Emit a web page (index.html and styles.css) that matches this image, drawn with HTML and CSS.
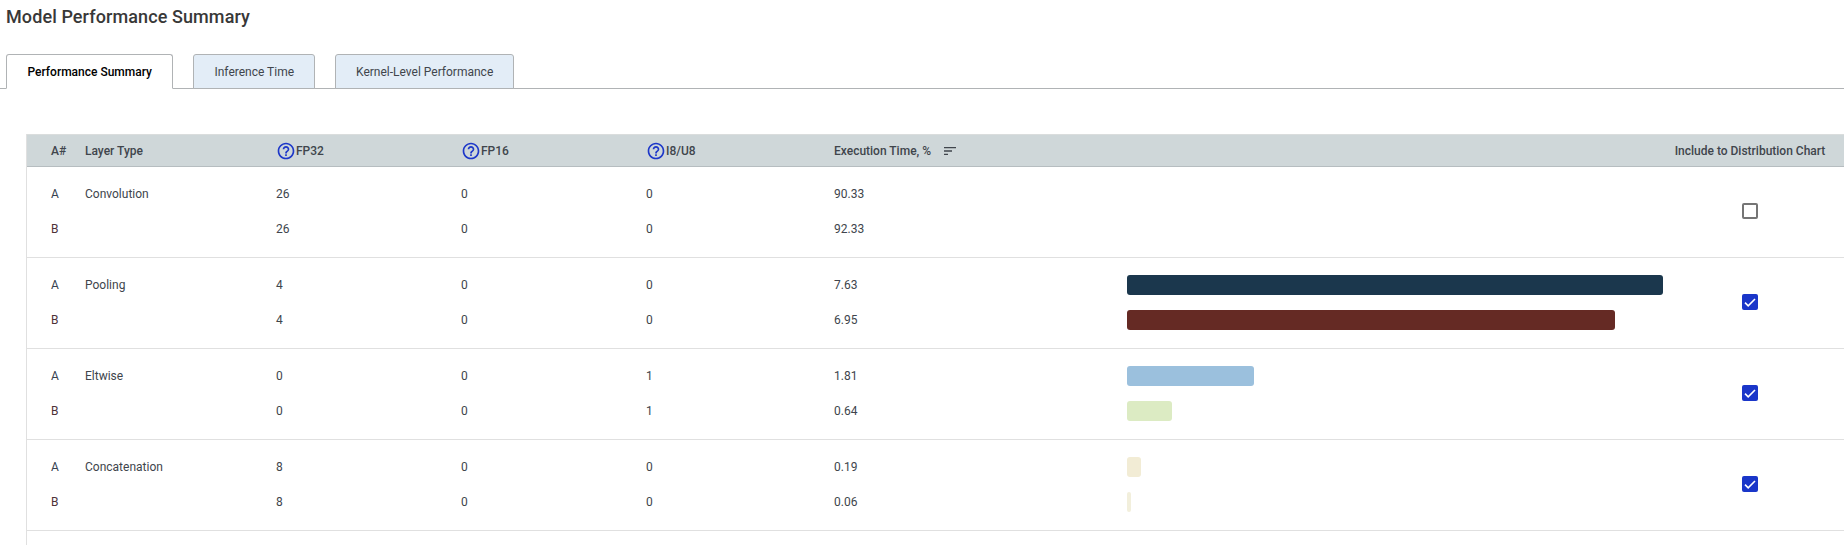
FILE: index.html
```html
<!DOCTYPE html>
<html lang="en">
<head>
    <meta charset="UTF-8">
    <meta name="viewport" content="width=device-width, initial-scale=1.0">
    <title>Model Performance Summary</title>
    <link rel="stylesheet" href="styles.css">
</head>
<body>
    <h1 class="page-title">Model Performance Summary</h1>

    <nav class="tabs">
        <a class="tab tab-active">Performance Summary</a>
        <a class="tab">Inference Time</a>
        <a class="tab">Kernel-Level Performance</a>
    </nav>

    <main class="summary">
        <!-- Table header -->
        <div class="grid-row table-head">
            <div>A#</div>
            <div>Layer Type</div>
            <div class="head-help">
                <svg class="help-icon" viewBox="0 0 24 24"><path d="M11 18h2v-2h-2v2zm1-16C6.48 2 2 6.48 2 12s4.48 10 10 10 10-4.48 10-10S17.52 2 12 2zm0 18c-4.41 0-8-3.59-8-8s3.59-8 8-8 8 3.59 8 8-3.59 8-8 8zm0-14c-2.21 0-4 1.79-4 4h2c0-1.1.9-2 2-2s2 .9 2 2c0 2-3 1.75-3 5h2c0-2.25 3-2.5 3-5 0-2.21-1.79-4-4-4z"/></svg>FP32
            </div>
            <div class="head-help">
                <svg class="help-icon" viewBox="0 0 24 24"><path d="M11 18h2v-2h-2v2zm1-16C6.48 2 2 6.48 2 12s4.48 10 10 10 10-4.48 10-10S17.52 2 12 2zm0 18c-4.41 0-8-3.59-8-8s3.59-8 8-8 8 3.59 8 8-3.59 8-8 8zm0-14c-2.21 0-4 1.79-4 4h2c0-1.1.9-2 2-2s2 .9 2 2c0 2-3 1.75-3 5h2c0-2.25 3-2.5 3-5 0-2.21-1.79-4-4-4z"/></svg>FP16
            </div>
            <div class="head-help">
                <svg class="help-icon" viewBox="0 0 24 24"><path d="M11 18h2v-2h-2v2zm1-16C6.48 2 2 6.48 2 12s4.48 10 10 10 10-4.48 10-10S17.52 2 12 2zm0 18c-4.41 0-8-3.59-8-8s3.59-8 8-8 8 3.59 8 8-3.59 8-8 8zm0-14c-2.21 0-4 1.79-4 4h2c0-1.1.9-2 2-2s2 .9 2 2c0 2-3 1.75-3 5h2c0-2.25 3-2.5 3-5 0-2.21-1.79-4-4-4z"/></svg>I8/U8
            </div>
            <div class="head-sort">
                Execution Time, %
                <svg class="sort-icon" viewBox="0 0 24 24"><path d="M3 18h6v-2H3v2zM3 6v2h18V6H3zm0 7h12v-2H3v2z"/></svg>
            </div>
            <div></div>
            <div class="head-include">Include to Distribution Chart</div>
        </div>

        <!-- Convolution -->
        <div class="grid-row layer">
            <div class="model-a">A</div>
            <div>Convolution</div>
            <div>26</div>
            <div>0</div>
            <div>0</div>
            <div>90.33</div>
            <div></div>
            <div class="include-cell"><span class="check"></span></div>

            <div class="model-b">B</div>
            <div></div>
            <div>26</div>
            <div>0</div>
            <div>0</div>
            <div>92.33</div>
            <div></div>
        </div>

        <!-- Pooling -->
        <div class="grid-row layer">
            <div class="model-a">A</div>
            <div>Pooling</div>
            <div>4</div>
            <div>0</div>
            <div>0</div>
            <div>7.63</div>
            <div><div class="bar bar-navy" style="width: 536px"></div></div>
            <div class="include-cell">
                <span class="check check-on"><svg viewBox="0 0 16 16"><path d="M3 8.6l3.2 3.2L13 5"/></svg></span>
            </div>

            <div class="model-b">B</div>
            <div></div>
            <div>4</div>
            <div>0</div>
            <div>0</div>
            <div>6.95</div>
            <div><div class="bar bar-maroon" style="width: 488px"></div></div>
        </div>

        <!-- Eltwise -->
        <div class="grid-row layer">
            <div class="model-a">A</div>
            <div>Eltwise</div>
            <div>0</div>
            <div>0</div>
            <div>1</div>
            <div>1.81</div>
            <div><div class="bar bar-blue" style="width: 127px"></div></div>
            <div class="include-cell">
                <span class="check check-on"><svg viewBox="0 0 16 16"><path d="M3 8.6l3.2 3.2L13 5"/></svg></span>
            </div>

            <div class="model-b">B</div>
            <div></div>
            <div>0</div>
            <div>0</div>
            <div>1</div>
            <div>0.64</div>
            <div><div class="bar bar-green" style="width: 45px"></div></div>
        </div>

        <!-- Concatenation -->
        <div class="grid-row layer">
            <div class="model-a">A</div>
            <div>Concatenation</div>
            <div>8</div>
            <div>0</div>
            <div>0</div>
            <div>0.19</div>
            <div><div class="bar bar-sand" style="width: 14px"></div></div>
            <div class="include-cell">
                <span class="check check-on"><svg viewBox="0 0 16 16"><path d="M3 8.6l3.2 3.2L13 5"/></svg></span>
            </div>

            <div class="model-b">B</div>
            <div></div>
            <div>8</div>
            <div>0</div>
            <div>0</div>
            <div>0.06</div>
            <div><div class="bar bar-pale" style="width: 4px"></div></div>
        </div>
    </main>
</body>
</html>
```

FILE: styles.css
```css
/* Page */
html, body {
    height: 100%;
}

body {
    margin: 0;
    display: flex;
    flex-direction: column;
    overflow: hidden;
    background-color: white;
    color: #40454c;
    font-family: Roboto, "Liberation Sans", sans-serif;
    font-size: 12px;
}

.page-title {
    margin: 0;
    padding: 6px 0 0 6px;
    height: 54px;
    flex: none;
    box-sizing: border-box;
    font-size: 18px;
    line-height: 22px;
    font-weight: 500;
    letter-spacing: 0.1px;
    color: #383838;
}

/* Tabs */
.tabs {
    display: flex;
    flex: none;
    gap: 20px;
    height: 35px;
    box-sizing: border-box;
    padding-left: 6px;
    border-bottom: 1px solid #b0b3b5;
}

.tab {
    display: flex;
    align-items: center;
    justify-content: center;
    height: 35px;
    box-sizing: border-box;
    padding: 0 20px;
    background-color: #e3edf7;
    border: 1px solid #b0b3b5;
    border-radius: 3px 3px 0 0;
}

.tab-active {
    padding: 0 20.5px;
    background-color: white;
    border-bottom-color: white;
    color: black;
    font-weight: 500;
}

/* Table */
.summary {
    flex: 1;
    margin: 45px 0 0 26px;
    border-left: 1px solid #e0e0e0;
}

.grid-row {
    display: grid;
    grid-template-columns: 34px 191px 185px 185px 188px 293px 547px 170px;
    padding-left: 24px;
}

.table-head {
    height: 33px;
    box-sizing: border-box;
    align-items: center;
    background-color: #cfd7d9;
    border-top: 1px solid #dadddd;
    border-bottom: 1px solid #b6bdc0;
    font-weight: 500;
}

.head-help {
    display: flex;
    align-items: center;
}

.help-icon {
    width: 20px;
    height: 20px;
    fill: #1d37c9;
}

.head-sort {
    display: flex;
    align-items: center;
    gap: 11px;
}

.sort-icon {
    width: 16px;
    height: 16px;
    fill: #40454c;
}

.head-include {
    padding-right: 18px;
    text-align: center;
    white-space: nowrap;
}

.layer {
    grid-auto-rows: 35px;
    align-items: center;
    padding-top: 9px;
    padding-bottom: 11px;
    border-bottom: 1px solid #e0e0e0;
}

.model-a {
    color: #36424f;
}

.model-b {
    color: #4e3338;
}

.include-cell {
    grid-column: 8;
    grid-row: 1 / span 2;
    display: flex;
    justify-content: center;
    padding-right: 18px;
}

/* Checkbox */
.check {
    display: block;
    width: 16px;
    height: 16px;
    box-sizing: border-box;
    border: 2px solid #757575;
    border-radius: 2px;
}

.check-on {
    border: none;
    background-color: #1a36c9;
}

.check-on svg {
    display: block;
    fill: none;
    stroke: white;
    stroke-width: 1.6;
}

/* Bars */
.bar {
    height: 20px;
    border-radius: 3px;
}

.bar-navy { background-color: #1b374d; }
.bar-maroon { background-color: #652a24; }
.bar-blue { background-color: #9bc0dd; }
.bar-green { background-color: #dcebc3; }
.bar-sand { background-color: #f2ecd5; }
.bar-pale { background-color: #f2efdc; }
```
